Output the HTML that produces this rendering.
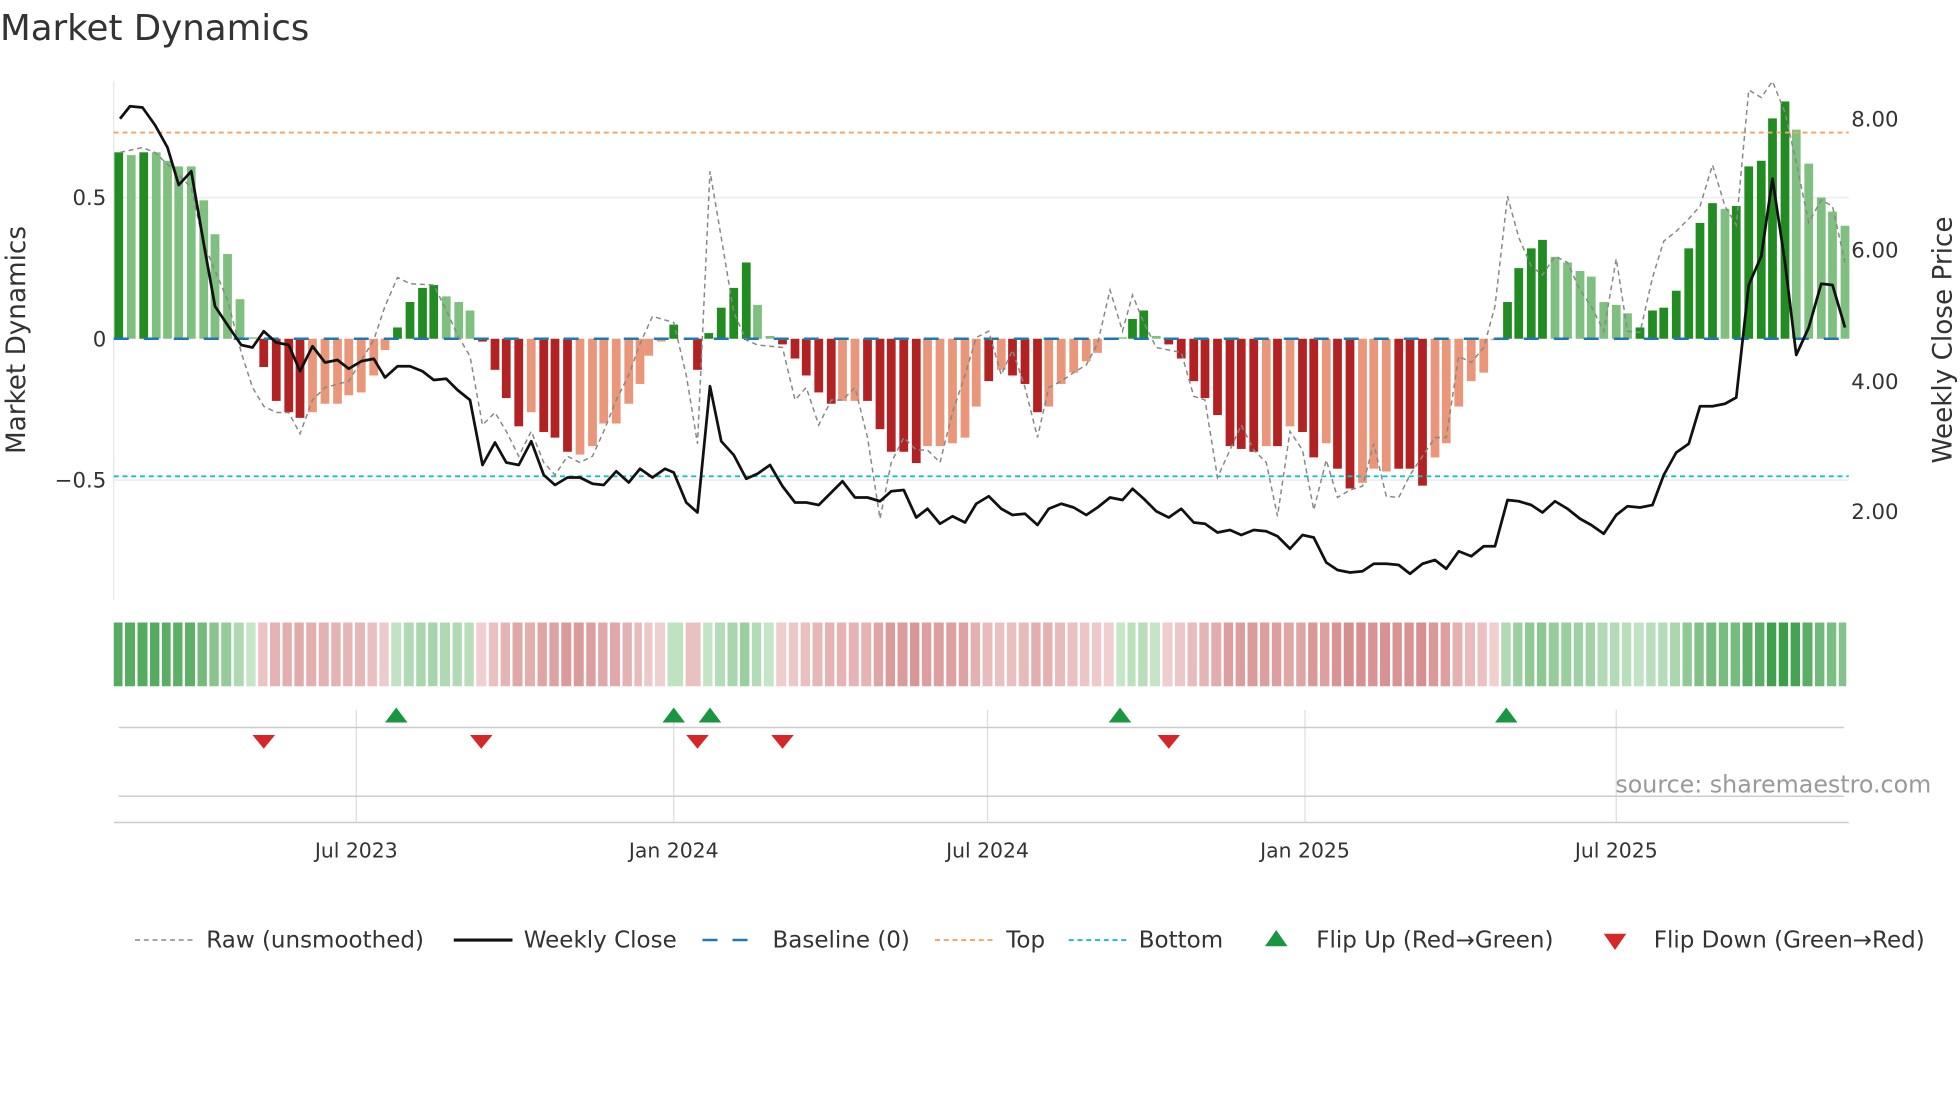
<!DOCTYPE html>
<html><head><meta charset="utf-8"><style>
html,body{margin:0;padding:0;background:#fff;width:1960px;height:1102px;overflow:hidden}
svg{display:block;font-family:"DejaVu Sans","Liberation Sans",sans-serif}
</style></head><body>
<svg id="s" width="1960" height="1102" viewBox="0 0 1568 881.6" xmlns="http://www.w3.org/2000/svg">
<text x="0" y="32" font-size="28.5" fill="#333">Market Dynamics</text>
<line x1="91" y1="65" x2="91" y2="480" stroke="#e4e4e4" stroke-width="1"/>
<line x1="91" y1="158" x2="1479" y2="158" stroke="#efefef" stroke-width="1.5"/>
<line x1="91" y1="384" x2="1479" y2="384" stroke="#efefef" stroke-width="1.5"/>
<g font-size="17" fill="#333">
<text x="85" y="164" text-anchor="end">0.5</text>
<text x="85" y="277" text-anchor="end">0</text>
<text x="85" y="390" text-anchor="end">−0.5</text>
<text x="1481" y="101">8.00</text>
<text x="1481" y="206">6.00</text>
<text x="1481" y="311">4.00</text>
<text x="1481" y="415">2.00</text>
</g>
<text transform="translate(20,272) rotate(-90)" font-size="21" fill="#333" text-anchor="middle">Market Dynamics</text>
<text transform="translate(1561,272) rotate(-90)" font-size="21" fill="#333" text-anchor="middle">Weekly Close Price</text>
<g id="bars"></g>
<line x1="91" y1="106" x2="1479" y2="106" stroke="#f4a460" stroke-width="1.5" stroke-dasharray="4 3"/>
<line x1="91" y1="381" x2="1479" y2="381" stroke="#17becf" stroke-width="1.5" stroke-dasharray="4 3"/>
<line x1="91" y1="271" x2="1479" y2="271" stroke="#1f77b4" stroke-width="2" stroke-dasharray="12 12"/>
<polyline id="raw" fill="none" stroke="#888" stroke-width="1.2" stroke-dasharray="4 3"/>
<polyline id="price" fill="none" stroke="#111" stroke-width="2.2" stroke-linejoin="round"/>
<g id="heat"></g>
<g stroke="#ddd" stroke-width="1">
<line x1="285" y1="568" x2="285" y2="658"/><line x1="539" y1="568" x2="539" y2="658"/>
<line x1="790" y1="568" x2="790" y2="658"/><line x1="1044" y1="568" x2="1044" y2="658"/>
<line x1="1293" y1="568" x2="1293" y2="658"/>
</g>
<line x1="95" y1="582" x2="1475" y2="582" stroke="#ccc" stroke-width="1.2"/>
<line x1="95" y1="637" x2="1475" y2="637" stroke="#ccc" stroke-width="1.2"/>
<line x1="91" y1="658" x2="1479" y2="658" stroke="#ccc" stroke-width="1.2"/>
<g id="flips"></g>
<text x="1545" y="634" font-size="19" fill="#999" text-anchor="end">source: sharemaestro.com</text>
<g font-size="16.3" fill="#333" text-anchor="middle">
<text x="285" y="686">Jul 2023</text><text x="539" y="686">Jan 2024</text>
<text x="790" y="686">Jul 2024</text><text x="1044" y="686">Jan 2025</text>
<text x="1293" y="686">Jul 2025</text>
</g>
<g font-size="18.4" fill="#333">
<line x1="108" y1="752" x2="154" y2="752" stroke="#888" stroke-width="1.2" stroke-dasharray="4 3"/>
<text x="165" y="758">Raw (unsmoothed)</text>
<line x1="363" y1="752" x2="410" y2="752" stroke="#111" stroke-width="2.5"/>
<text x="419" y="758">Weekly Close</text>
<line x1="562" y1="752" x2="608" y2="752" stroke="#1f77b4" stroke-width="2" stroke-dasharray="12 12"/>
<text x="618" y="758">Baseline (0)</text>
<line x1="748" y1="752" x2="794" y2="752" stroke="#f4a460" stroke-width="1.5" stroke-dasharray="4 3"/>
<text x="805" y="758">Top</text>
<line x1="855" y1="752" x2="901" y2="752" stroke="#17becf" stroke-width="1.5" stroke-dasharray="4 3"/>
<text x="911" y="758">Bottom</text>
<polygon points="1012,757 1030,757 1021,744" fill="#1a9641"/>
<text x="1053" y="758">Flip Up (Red→Green)</text>
<polygon points="1283,747 1301,747 1292,760" fill="#d62728"/>
<text x="1323" y="758">Flip Down (Green→Red)</text>
</g>
</svg>
<script>
var B=[[95,.66,1],[105,.65,0],[115,.66,1],[125,.66,0],[134,.63,0],[143,.61,0],[153,.61,0],[163,.49,0],[172,.37,0],[182,.30,0],[192,.14,0],[202,.005,0],[211,-.10,1],[221,-.22,1],[231,-.26,1],[240,-.28,1],[250,-.26,0],[260,-.23,0],[270,-.23,0],[279,-.20,0],[289,-.19,0],[299,-.13,0],[308,-.04,0],[318,.04,1],[328,.13,1],[338,.18,1],[347,.19,1],[357,.15,0],[367,.13,0],[376,.10,0],[386,-.01,1],[396,-.11,1],[405,-.21,1],[415,-.31,1],[425,-.26,0],[435,-.33,1],[444,-.35,1],[454,-.40,1],[464,-.41,0],[474,-.38,0],[483,-.30,0],[493,-.30,0],[503,-.23,0],[512,-.16,0],[519,-.06,0],[529,-.01,0],[539,.05,1],[558,-.11,1],[567,.02,1],[577,.11,1],[587,.18,1],[597,.27,1],[606,.12,0],[616,.01,0],[626,-.02,1],[636,-.07,1],[645,-.13,1],[655,-.19,1],[665,-.23,1],[674,-.22,0],[684,-.22,0],[694,-.22,1],[704,-.32,1],[713,-.40,1],[723,-.40,1],[733,-.44,1],[742,-.38,0],[752,-.38,0],[762,-.37,0],[772,-.35,0],[781,-.24,0],[791,-.15,1],[801,-.11,0],[810,-.13,1],[820,-.16,1],[830,-.26,1],[839,-.24,0],[849,-.16,0],[859,-.12,0],[869,-.08,0],[878,-.05,0],[888,-.005,0],[898,.005,0],[906,.07,1],[915,.10,1],[925,.01,0],[935,-.02,1],[945,-.07,1],[955,-.15,1],[964,-.21,1],[974,-.27,1],[984,-.38,1],[993,-.39,1],[1003,-.40,1],[1013,-.38,0],[1022,-.38,1],[1032,-.31,0],[1042,-.33,1],[1051,-.42,1],[1061,-.37,0],[1070,-.46,1],[1080,-.53,1],[1090,-.51,0],[1099,-.46,0],[1109,-.47,0],[1119,-.46,1],[1128,-.46,1],[1138,-.52,1],[1148,-.42,0],[1157,-.37,0],[1167,-.24,0],[1177,-.15,0],[1187,-.12,0],[1196,-.005,0],[1206,.13,1],[1215,.25,1],[1225,.32,1],[1234,.35,1],[1244,.29,0],[1254,.27,0],[1264,.24,0],[1273,.22,0],[1283,.13,0],[1293,.12,0],[1302,.09,0],[1312,.04,1],[1322,.10,1],[1331,.11,1],[1341,.17,1],[1351,.32,1],[1360,.41,1],[1370,.48,1],[1380,.46,0],[1389,.47,1],[1399,.61,1],[1409,.63,1],[1418,.78,1],[1428,.84,1],[1437,.74,0],[1447,.62,0],[1457,.50,0],[1466,.45,0],[1476,.40,0]];
var ns="http://www.w3.org/2000/svg";
function el(t,a,p){var e=document.createElementNS(ns,t);for(var k in a)e.setAttribute(k,a[k]);document.getElementById(p).appendChild(e);}
B.forEach(function(b){var v=b[1],h=Math.abs(v)*226,y=v>=0?271-h:271;
var c=v>=0?(b[2]?"#228b22":"#7fbf7f"):(b[2]?"#b22222":"#e9967a");
el("rect",{x:b[0]-3.5,y:y,width:7,height:Math.max(h,1),fill:c},"bars");});
function mix(a,b,t){return "rgb("+a.map(function(x,i){return Math.round(x+(b[i]-x)*t)}).join(",")+")";}
var hx=91;for(var i=0;i<B.length;i++){var v=B[i][1],c;
if(v>=0)c=mix([200,230,201],[61,158,74],Math.min(v/.8,1));else c=mix([240,208,208],[214,142,142],Math.min(-v/.5,1));
var nx=i<B.length-1?(B[i][0]+B[i+1][0])/2:1479;el("rect",{x:hx,y:498,width:Math.max(nx-hx-2,1),height:51,fill:c},"heat");hx=nx;}
var P=[[96,95],[104,85],[114,86],[124,100],[134,118],[143,148],[153,137],[163,195],[172,245],[182,260],[193,276],[202,278],[211,265],[221,274],[231,276],[240,297],[250,277],[260,290],[270,288],[279,295],[289,289],[299,287],[308,302],[318,293],[328,293],[338,297],[347,304],[357,303],[366,312],[376,320],[386,372],[396,354],[405,370],[415,372],[425,353],[435,380],[444,388],[454,382],[464,382],[474,387],[483,388],[493,377],[503,386],[512,375],[522,382],[532,375],[539,378],[549,402],[558,410],[568,309],[577,353],[587,364],[597,383],[606,379],[616,372],[626,389],[636,402],[645,402],[655,404],[665,394],[674,385],[684,398],[694,398],[704,401],[713,393],[723,392],[733,414],[742,407],[752,419],[762,413],[772,418],[781,403],[791,397],[801,407],[810,412],[820,411],[830,420],[839,407],[849,403],[859,406],[869,412],[878,406],[888,398],[898,400],[906,391],[915,399],[925,409],[935,414],[945,407],[955,418],[964,419],[974,426],[984,424],[993,428],[1003,424],[1013,425],[1022,429],[1032,439],[1042,428],[1051,430],[1061,450],[1070,456],[1080,458],[1090,457],[1099,451],[1109,451],[1119,452],[1128,459],[1138,451],[1148,448],[1157,455],[1167,441],[1177,445],[1187,437],[1196,437],[1206,400],[1215,401],[1225,404],[1234,410],[1244,401],[1254,407],[1264,415],[1273,420],[1283,427],[1293,412],[1302,405],[1312,406],[1322,404],[1331,380],[1341,362],[1351,355],[1360,325],[1370,325],[1380,323],[1389,318],[1399,228],[1409,205],[1418,143],[1428,210],[1437,284],[1447,262],[1457,227],[1466,228],[1476,262]];
document.getElementById("price").setAttribute("points",P.join(" "));
var R=[[96,122],[114,118],[124,122],[143,140],[153,150],[163,195],[182,240],[193,282],[202,310],[211,325],[221,330],[231,330],[240,347],[250,320],[260,310],[279,305],[299,272],[308,245],[318,222],[328,227],[347,228],[357,248],[366,268],[376,285],[386,340],[396,330],[405,345],[415,365],[425,345],[435,370],[444,380],[454,365],[464,370],[474,365],[483,345],[493,320],[503,300],[512,275],[522,253],[532,256],[539,258],[549,300],[558,355],[568,137],[577,190],[587,250],[597,272],[606,276],[616,277],[626,278],[636,320],[645,310],[655,340],[665,320],[674,320],[684,310],[694,350],[704,415],[713,370],[723,350],[733,360],[742,360],[752,370],[762,330],[772,300],[781,270],[791,265],[801,300],[810,280],[820,310],[830,350],[839,310],[849,305],[859,298],[869,292],[878,275],[888,232],[898,265],[906,236],[915,258],[925,278],[935,280],[945,282],[955,317],[964,320],[974,382],[984,360],[993,340],[1003,360],[1013,370],[1022,413],[1032,345],[1042,360],[1051,408],[1061,368],[1070,398],[1080,392],[1090,389],[1099,355],[1109,397],[1119,398],[1128,380],[1138,365],[1148,350],[1157,350],[1167,285],[1177,290],[1187,278],[1196,245],[1206,157],[1215,190],[1225,213],[1234,220],[1244,205],[1254,210],[1264,232],[1273,245],[1283,265],[1293,207],[1302,265],[1312,266],[1322,222],[1331,193],[1341,185],[1351,175],[1360,165],[1370,132],[1380,165],[1389,180],[1399,72],[1409,78],[1418,65],[1428,90],[1437,130],[1447,178],[1457,160],[1466,165],[1476,210]];
document.getElementById("raw").setAttribute("points",R.join(" "));
[317,539,568,896,1205].forEach(function(x){el("polygon",{points:(x-9)+",578 "+(x+9)+",578 "+x+",566",fill:"#1a9641"},"flips");});
[211,385,558,626,935].forEach(function(x){el("polygon",{points:(x-9)+",588 "+(x+9)+",588 "+x+",599",fill:"#d62728"},"flips");});
</script>
</body></html>
